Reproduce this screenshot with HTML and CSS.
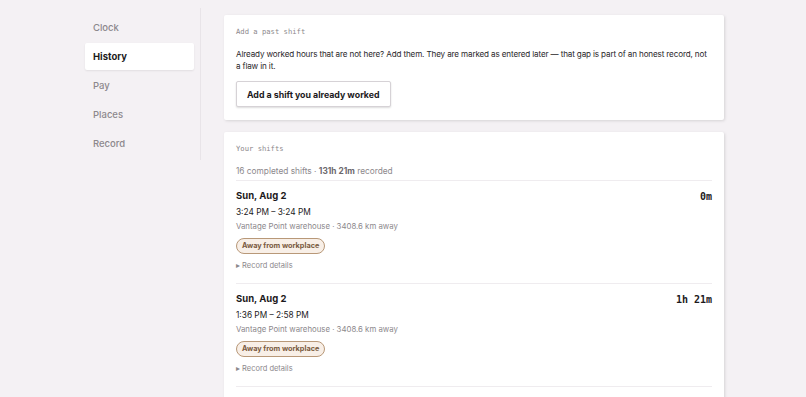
FILE: index.html
```html
<!DOCTYPE html>
<html lang="en">
<head>
  <meta charset="UTF-8">
  <meta name="viewport" content="width=device-width, initial-scale=1.0">
  <title>History</title>
  <link rel="stylesheet" href="styles.css">
</head>
<body>
  <div class="layout">
    <nav class="sidebar">
      <a class="nav-item">Clock</a>
      <a class="nav-item active">History</a>
      <a class="nav-item">Pay</a>
      <a class="nav-item">Places</a>
      <a class="nav-item">Record</a>
    </nav>

    <main class="content">
      <section class="card">
        <div class="card-label">Add a past shift</div>
        <p class="intro">Already worked hours that are not here? Add them. They are marked as entered later — that gap is part of an honest record, not a flaw in it.</p>
        <button class="add-btn">Add a shift you already worked</button>
      </section>

      <section class="card">
        <div class="card-label">Your shifts</div>
        <div class="summary">16 completed shifts · <b>131h 21m</b> recorded</div>

        <div class="shift">
          <div class="shift-head">
            <div class="shift-date">Sun, Aug 2</div>
            <div class="shift-dur">0m</div>
          </div>
          <div class="shift-time">3:24 PM – 3:24 PM</div>
          <div class="shift-place">Vantage Point warehouse · 3408.6 km away</div>
          <span class="badge">Away from workplace</span>
          <div class="details">&#9656; Record details</div>
        </div>

        <div class="shift">
          <div class="shift-head">
            <div class="shift-date">Sun, Aug 2</div>
            <div class="shift-dur">1h 21m</div>
          </div>
          <div class="shift-time">1:36 PM – 2:58 PM</div>
          <div class="shift-place">Vantage Point warehouse · 3408.6 km away</div>
          <span class="badge">Away from workplace</span>
          <div class="details">&#9656; Record details</div>
        </div>

        <div class="shift">
          <div class="shift-head">
            <div class="shift-date">Sun, Aug 2</div>
            <div class="shift-dur">1h 0m</div>
          </div>
          <div class="shift-time">12:10 PM – 1:10 PM</div>
          <div class="shift-place">Vantage Point warehouse · 3408.6 km away</div>
          <span class="badge">Away from workplace</span>
          <div class="details">&#9656; Record details</div>
        </div>
      </section>
    </main>
  </div>
</body>
</html>
```

FILE: styles.css
```css
body {
  font-family: 'Inter', 'Liberation Sans', Arial, sans-serif;
  background-color: #f4f1f4;
  color: #1c1a1c;
  margin: 0;
  padding: 0;
}

.layout {
  display: flex;
  align-items: flex-start;
  width: 639px;
  margin-left: calc(50% - 318px);
  padding-top: 8px;
}

.sidebar {
  width: 109px;
  flex-shrink: 0;
  display: flex;
  flex-direction: column;
  gap: 2px;
  padding: 6px 6px 3px 0;
  border-right: 1px solid #e8e4e8;
}

.nav-item {
  display: block;
  font-size: 9.5px;
  font-weight: 500;
  color: #8c888c;
  padding: 0 8px;
  height: 27px;
  line-height: 27px;
  border-radius: 2px;
}

.nav-item.active {
  background: #ffffff;
  color: #1c1a1c;
  font-weight: 700;
  box-shadow: 0 1px 2px rgba(0, 0, 0, 0.08);
}

.content {
  flex: 1;
  margin-left: 23px;
  display: flex;
  flex-direction: column;
  gap: 12px;
  padding-top: 7px;
}

.card {
  background: #ffffff;
  padding: 12px 12px 13px;
  box-shadow: 1px 1px 3px rgba(0, 0, 0, 0.12);
  border-radius: 2px;
}

.card-label {
  font-family: 'DejaVu Sans Mono', monospace;
  font-size: 7.2px;
  color: #8c888c;
  line-height: 10px;
  margin-bottom: 11px;
}

.intro {
  font-size: 8.1px;
  letter-spacing: -0.14px;
  line-height: 12px;
  margin: 0 0 9px 0;
  color: #2a272a;
}

.add-btn {
  display: block;
  font-family: inherit;
  font-size: 8.8px;
  font-weight: 700;
  color: #1c1a1c;
  background: #ffffff;
  border: 1px solid #d6d2d6;
  border-radius: 2px;
  padding: 0 10px;
  height: 26px;
  box-shadow: 0 1px 2px rgba(0, 0, 0, 0.14);
}

.summary {
  font-size: 8.3px;
  color: #8c888c;
  line-height: 12px;
  padding-bottom: 3px;
  border-bottom: 1px solid #efecef;
}

.summary b {
  color: #6c686c;
}

.shift {
  padding: 8px 0 12px;
  border-bottom: 1px solid #efecef;
}

.shift-head {
  display: flex;
  justify-content: space-between;
  align-items: center;
}

.shift-date {
  font-size: 9.5px;
  font-weight: 700;
  line-height: 14px;
}

.shift-dur {
  font-family: 'DejaVu Sans Mono', monospace;
  font-size: 10px;
  font-weight: 700;
  color: #1c1a1c;
}

.shift-time {
  font-size: 8.3px;
  line-height: 12px;
  margin-top: 3px;
}

.shift-place {
  font-size: 7.8px;
  color: #8c888c;
  line-height: 12px;
  margin-top: 2px;
}

.badge {
  display: block;
  width: fit-content;
  margin-top: 6px;
  font-size: 7.3px;
  font-weight: 700;
  color: #7a5a40;
  background: #f8efe7;
  border: 1px solid #b89878;
  border-radius: 9px;
  padding: 0 5px;
  height: 14px;
  line-height: 14px;
}

.details {
  font-size: 7.5px;
  color: #8c888c;
  margin-top: 7px;
  line-height: 10px;
}
```
